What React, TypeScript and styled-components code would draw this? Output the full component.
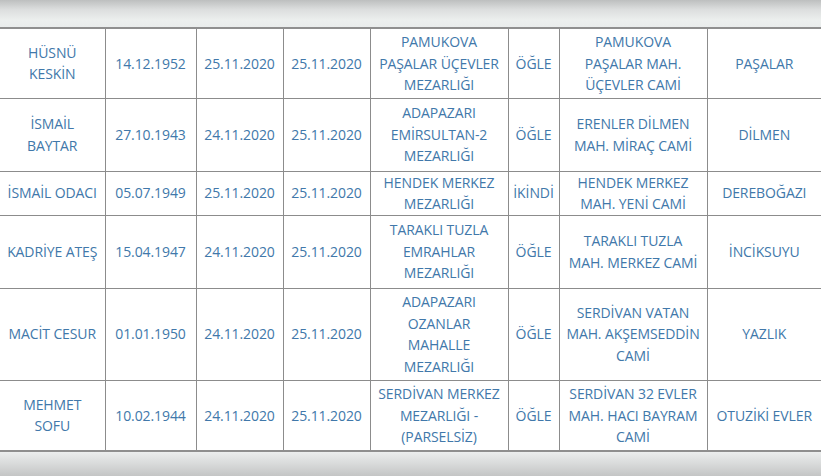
import React from 'react'
import styled, { createGlobalStyle } from 'styled-components'

const GlobalStyle = createGlobalStyle`
  html, body {
    margin: 0;
    padding: 0;
    background: #e4e6e6;
  }
  body {
    font-family: "Open Sans", "DejaVu Sans", sans-serif;
  }
`

const Page = styled.div`
  width: 821px;
  height: 476px;
  display: flex;
  flex-direction: column;
  overflow: hidden;
`

const BlurBand = styled.div<{ $bottom?: boolean }>`
  flex: ${p => (p.$bottom ? '1' : '0 0 27px')};
  background: ${p =>
    p.$bottom
      ? 'linear-gradient(180deg, #eceeee 0%, #dcdede 40%, #c4c5c5 100%)'
      : 'linear-gradient(180deg, #bdbfbf 0%, #dcdede 35%, #ecefee 75%, #e9ecec 100%)'};
`

const Table = styled.table`
  width: 821px;
  border-collapse: collapse;
  table-layout: fixed;
  background: #ffffff;
  border-top: 2px solid #8f8f8f;
  border-bottom: 2px solid #8f8f8f;
`

const Row = styled.tr<{ $h: number }>`
  height: ${p => p.$h}px;
`

const Cell = styled.td`
  border: 1px solid #8c8c8c;
  padding: 0 1px;
  text-align: center;
  vertical-align: middle;
  color: #4178aa;
  font-size: 14px;
  line-height: 21.5px;
  white-space: nowrap;
  letter-spacing: -0.1px;

  &:first-child {
    border-left: none;
  }
  &:last-child {
    border-right: none;
  }
`

const widths = [105, 91, 87, 87, 138, 51, 148, 114]

type Rec = { h: number; cells: string[][] }

const rows: Rec[] = [
  {
    h: 70,
    cells: [
      ['HÜSNÜ', 'KESKİN'],
      ['14.12.1952'],
      ['25.11.2020'],
      ['25.11.2020'],
      ['PAMUKOVA', 'PAŞALAR ÜÇEVLER', 'MEZARLIĞI'],
      ['ÖĞLE'],
      ['PAMUKOVA', 'PAŞALAR MAH.', 'ÜÇEVLER CAMİ'],
      ['PAŞALAR'],
    ],
  },
  {
    h: 73,
    cells: [
      ['İSMAİL', 'BAYTAR'],
      ['27.10.1943'],
      ['24.11.2020'],
      ['25.11.2020'],
      ['ADAPAZARI', 'EMİRSULTAN-2', 'MEZARLIĞI'],
      ['ÖĞLE'],
      ['ERENLER DİLMEN', 'MAH. MİRAÇ CAMİ'],
      ['DİLMEN'],
    ],
  },
  {
    h: 43,
    cells: [
      ['İSMAİL ODACI'],
      ['05.07.1949'],
      ['25.11.2020'],
      ['25.11.2020'],
      ['HENDEK MERKEZ', 'MEZARLIĞI'],
      ['İKİNDİ'],
      ['HENDEK MERKEZ', 'MAH. YENİ CAMİ'],
      ['DEREBOĞAZI'],
    ],
  },
  {
    h: 73,
    cells: [
      ['KADRİYE ATEŞ'],
      ['15.04.1947'],
      ['24.11.2020'],
      ['25.11.2020'],
      ['TARAKLI TUZLA', 'EMRAHLAR', 'MEZARLIĞI'],
      ['ÖĞLE'],
      ['TARAKLI TUZLA', 'MAH. MERKEZ CAMİ'],
      ['İNCİKSUYU'],
    ],
  },
  {
    h: 92,
    cells: [
      ['MACİT CESUR'],
      ['01.01.1950'],
      ['24.11.2020'],
      ['25.11.2020'],
      ['ADAPAZARI', 'OZANLAR', 'MAHALLE', 'MEZARLIĞI'],
      ['ÖĞLE'],
      ['SERDİVAN VATAN', 'MAH. AKŞEMSEDDİN', 'CAMİ'],
      ['YAZLIK'],
    ],
  },
  {
    h: 71,
    cells: [
      ['MEHMET', 'SOFU'],
      ['10.02.1944'],
      ['24.11.2020'],
      ['25.11.2020'],
      ['SERDİVAN MERKEZ', 'MEZARLIĞI -', '(PARSELSİZ)'],
      ['ÖĞLE'],
      ['SERDİVAN 32 EVLER', 'MAH. HACI BAYRAM', 'CAMİ'],
      ['OTUZİKİ EVLER'],
    ],
  },
]

export default function App() {
  return (
    <>
      <GlobalStyle />
      <Page>
        <BlurBand />
        <Table>
          <colgroup>
            {widths.map((w, i) => (
              <col key={i} style={{ width: w }} />
            ))}
          </colgroup>
          <tbody>
            {rows.map((r, ri) => (
              <Row key={ri} $h={r.h}>
                {r.cells.map((lines, ci) => (
                  <Cell key={ci}>
                    {lines.map((l, li) => (
                      <React.Fragment key={li}>
                        {li > 0 && <br />}
                        {l}
                      </React.Fragment>
                    ))}
                  </Cell>
                ))}
              </Row>
            ))}
          </tbody>
        </Table>
        <BlurBand $bottom />
      </Page>
    </>
  )
}
